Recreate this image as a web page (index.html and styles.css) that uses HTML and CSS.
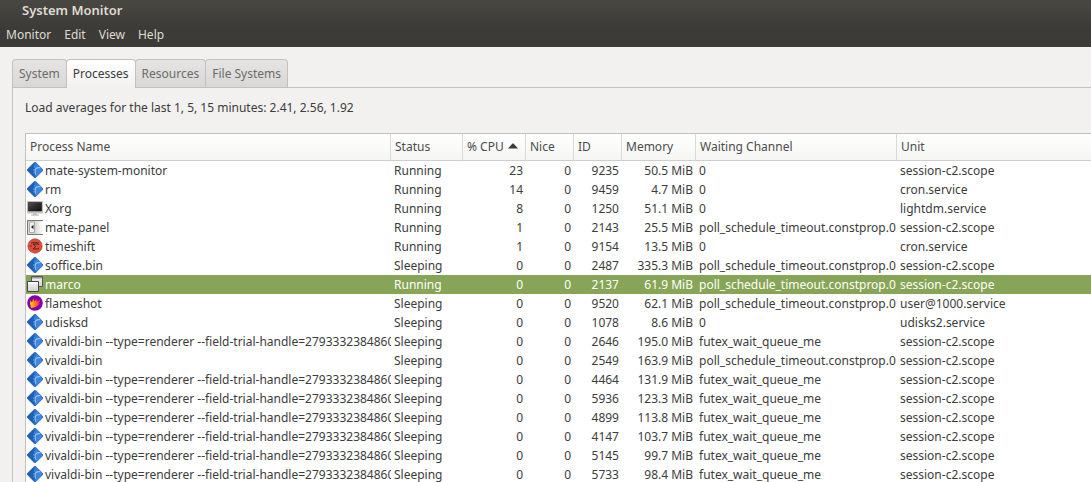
FILE: index.html
```html
<!DOCTYPE html>
<html lang="en">
<head>
<meta charset="utf-8">
<title>System Monitor</title>
<link rel="stylesheet" href="styles.css">
</head>
<body>
<svg class="sprite" aria-hidden="true">
  <defs>
    <linearGradient id="blue" x1="0" y1="0" x2="1" y2="0"><stop offset="0.4" stop-color="#1c61b8"/><stop offset="0.6" stop-color="#3b86e0"/></linearGradient>
    <linearGradient id="glass" x1="0" y1="0" x2="1" y2="1"><stop offset="0" stop-color="#555"/><stop offset="0.5" stop-color="#2c2c2c"/><stop offset="1" stop-color="#151515"/></linearGradient>
    <linearGradient id="pane" x1="0" y1="0" x2="0" y2="1"><stop offset="0" stop-color="#f8f8f8"/><stop offset="1" stop-color="#cfcfcf"/></linearGradient>
    <linearGradient id="fade" x1="0" y1="0" x2="1" y2="0"><stop offset="0.5" stop-color="#d8d8d3"/><stop offset="1" stop-color="#fff"/></linearGradient>
    <linearGradient id="flame" x1="0" y1="0" x2="1" y2="0"><stop offset="0.1" stop-color="#ffc400"/><stop offset="0.5" stop-color="#ff7a18"/><stop offset="1" stop-color="#ff1450"/></linearGradient>
  </defs>
  <symbol id="app" viewBox="0 0 16 16">
    <path d="M7 .8Q8 0 9 .8L15.3 7Q16 8 15.3 9L9 15.3Q8 16 7 15.3L.7 9Q0 8 .7 7Z" fill="url(#blue)" stroke="#1c559f" stroke-width=".7"/>
    <path d="M13 5Q8.5 4.5 7.6 7.8Q7.2 10 8.5 13.2L9.3 12.4Q8.3 9.3 8.9 7.8Q9.8 6 13.6 6Z" fill="#8fc0f5"/>
    <path d="M8.4 5.6L7.2 4.7M7.4 8L6 8M7.6 10.5L6.3 11" stroke="#76aeee" stroke-width="1"/>
  </symbol>
  <symbol id="screen" viewBox="0 0 16 16">
    <path d="M.5 1.5H15.5V13H.5Z" fill="#cfcfca" stroke="#aaa" stroke-width=".7"/>
    <path d="M1.5 2.5H14.5V11H1.5Z" fill="url(#glass)" stroke="#111" stroke-width=".6"/>
    <path d="M6 13H10V14.5H12V15.8H4V14.5H6Z" fill="#c2c2be"/>
  </symbol>
  <symbol id="panel" viewBox="0 0 16 16">
    <path d="M.5 1H16V15.5H.5Z" fill="url(#fade)"/>
    <path d="M16 1.5H.5V15.5H16" fill="none" stroke="#777"/>
    <path d="M2.5 3H7.5V13.5H2.5Z" fill="#f1f1ec" stroke="#aaa"/>
    <path d="M6.5 5.7V10.3L4 8Z" fill="#222"/>
    <path d="M12.5 4.5H14.5V6.5H12.5Z" fill="#fff"/>
  </symbol>
  <symbol id="shift" viewBox="0 0 16 16">
    <circle cx="8" cy="8" r="7.2" fill="#e04c3c" stroke="#a8382d" stroke-width=".6"/>
    <path d="M4 5Q8 3.6 12 5" fill="none" stroke="#692720" stroke-width="1"/>
    <path d="M11.2 7V6H6L8.7 8.4L6 11H11.4V9.8" fill="none" stroke="#4a2520" stroke-width="1"/>
    <path d="M2.8 8H5" stroke="#692720" stroke-width=".8"/>
  </symbol>
  <symbol id="windows" viewBox="0 0 16 16">
    <path d="M4.5 .5H15.5V10.5H4.5Z" fill="url(#pane)" stroke="#555"/>
    <path d="M5 1H15V2.5H5Z" fill="#999"/>
    <path d="M.5 5.5H11.5V15.5H.5Z" fill="url(#pane)" stroke="#454545"/>
    <path d="M1 6H11V7.5H1Z" fill="#fff"/>
  </symbol>
  <symbol id="fire" viewBox="0 0 16 16">
    <circle cx="8" cy="8" r="7.8" fill="#8500a8"/>
    <path d="M4.2 13L3 8.5L3.4 5.2L5 7.5L6.3 3.4L7.3 6.6L9.8 3.8L9.5 6.4L13.5 4.7L11.3 8.6L13 8.3Q9.5 12.8 4.2 13Z" fill="url(#flame)"/>
  </symbol>
</svg>

<header class="chrome">
  <h1 class="title">System Monitor</h1>
  <nav class="menubar">
    <button type="button">Monitor</button>
    <button type="button">Edit</button>
    <button type="button">View</button>
    <button type="button">Help</button>
  </nav>
</header>

<main class="content">
  <div class="tabs" role="tablist">
    <button type="button" role="tab" class="tab" aria-selected="false">System</button>
    <button type="button" role="tab" class="tab tab-active" aria-selected="true">Processes</button>
    <button type="button" role="tab" class="tab" aria-selected="false">Resources</button>
    <button type="button" role="tab" class="tab" aria-selected="false">File Systems</button>
  </div>
  <section class="page" role="tabpanel" aria-label="Processes">
    <p class="load">Load averages for the last 1, 5, 15 minutes: 2.41, 2.56, 1.92</p>
    <div class="list">
      <table class="processes">
        <colgroup>
          <col class="c-name"><col class="c-status"><col class="c-cpu"><col class="c-nice"><col class="c-id"><col class="c-memory"><col class="c-channel"><col class="c-unit">
        </colgroup>
        <thead>
          <tr><th>Process Name</th><th>Status</th><th aria-sort="descending"><span class="sorted">% CPU <svg class="arrow" viewBox="0 0 10 6" aria-hidden="true"><path d="M0 5.5L4.5 .5H5.5L10 5.5Z"/></svg></span></th><th>Nice</th><th>ID</th><th>Memory</th><th>Waiting Channel</th><th>Unit</th></tr>
        </thead>
        <tbody>
          <tr><td><svg class="icon"><use href="#app"/></svg>mate-system-monitor</td><td>Running</td><td>23</td><td>0</td><td>9235</td><td>50.5 MiB</td><td>0</td><td>session-c2.scope</td></tr>
          <tr><td><svg class="icon"><use href="#app"/></svg>rm</td><td>Running</td><td>14</td><td>0</td><td>9459</td><td>4.7 MiB</td><td>0</td><td>cron.service</td></tr>
          <tr><td><svg class="icon"><use href="#screen"/></svg>Xorg</td><td>Running</td><td>8</td><td>0</td><td>1250</td><td>51.1 MiB</td><td>0</td><td>lightdm.service</td></tr>
          <tr><td><svg class="icon"><use href="#panel"/></svg>mate-panel</td><td>Running</td><td>1</td><td>0</td><td>2143</td><td>25.5 MiB</td><td>poll_schedule_timeout.constprop.0</td><td>session-c2.scope</td></tr>
          <tr><td><svg class="icon"><use href="#shift"/></svg>timeshift</td><td>Running</td><td>1</td><td>0</td><td>9154</td><td>13.5 MiB</td><td>0</td><td>cron.service</td></tr>
          <tr><td><svg class="icon"><use href="#app"/></svg>soffice.bin</td><td>Sleeping</td><td>0</td><td>0</td><td>2487</td><td>335.3 MiB</td><td>poll_schedule_timeout.constprop.0</td><td>session-c2.scope</td></tr>
          <tr class="selected"><td><svg class="icon"><use href="#windows"/></svg>marco</td><td>Running</td><td>0</td><td>0</td><td>2137</td><td>61.9 MiB</td><td>poll_schedule_timeout.constprop.0</td><td>session-c2.scope</td></tr>
          <tr><td><svg class="icon"><use href="#fire"/></svg>flameshot</td><td>Sleeping</td><td>0</td><td>0</td><td>9520</td><td>62.1 MiB</td><td>poll_schedule_timeout.constprop.0</td><td>user@1000.service</td></tr>
          <tr><td><svg class="icon"><use href="#app"/></svg>udisksd</td><td>Sleeping</td><td>0</td><td>0</td><td>1078</td><td>8.6 MiB</td><td>0</td><td>udisks2.service</td></tr>
          <tr><td><svg class="icon"><use href="#app"/></svg>vivaldi-bin --type=renderer --field-trial-handle=2793332384860</td><td>Sleeping</td><td>0</td><td>0</td><td>2646</td><td>195.0 MiB</td><td>futex_wait_queue_me</td><td>session-c2.scope</td></tr>
          <tr><td><svg class="icon"><use href="#app"/></svg>vivaldi-bin</td><td>Sleeping</td><td>0</td><td>0</td><td>2549</td><td>163.9 MiB</td><td>poll_schedule_timeout.constprop.0</td><td>session-c2.scope</td></tr>
          <tr><td><svg class="icon"><use href="#app"/></svg>vivaldi-bin --type=renderer --field-trial-handle=2793332384860</td><td>Sleeping</td><td>0</td><td>0</td><td>4464</td><td>131.9 MiB</td><td>futex_wait_queue_me</td><td>session-c2.scope</td></tr>
          <tr><td><svg class="icon"><use href="#app"/></svg>vivaldi-bin --type=renderer --field-trial-handle=2793332384860</td><td>Sleeping</td><td>0</td><td>0</td><td>5936</td><td>123.3 MiB</td><td>futex_wait_queue_me</td><td>session-c2.scope</td></tr>
          <tr><td><svg class="icon"><use href="#app"/></svg>vivaldi-bin --type=renderer --field-trial-handle=2793332384860</td><td>Sleeping</td><td>0</td><td>0</td><td>4899</td><td>113.8 MiB</td><td>futex_wait_queue_me</td><td>session-c2.scope</td></tr>
          <tr><td><svg class="icon"><use href="#app"/></svg>vivaldi-bin --type=renderer --field-trial-handle=2793332384860</td><td>Sleeping</td><td>0</td><td>0</td><td>4147</td><td>103.7 MiB</td><td>futex_wait_queue_me</td><td>session-c2.scope</td></tr>
          <tr><td><svg class="icon"><use href="#app"/></svg>vivaldi-bin --type=renderer --field-trial-handle=2793332384860</td><td>Sleeping</td><td>0</td><td>0</td><td>5145</td><td>99.7 MiB</td><td>futex_wait_queue_me</td><td>session-c2.scope</td></tr>
          <tr><td><svg class="icon"><use href="#app"/></svg>vivaldi-bin --type=renderer --field-trial-handle=2793332384860</td><td>Sleeping</td><td>0</td><td>0</td><td>5733</td><td>98.4 MiB</td><td>futex_wait_queue_me</td><td>session-c2.scope</td></tr>
        </tbody>
      </table>
    </div>
  </section>
</main>
</body>
</html>
```

FILE: styles.css
```css
* { box-sizing: border-box; }

body {
  margin: 0;
  height: 100vh;
  overflow: hidden;
  background: #f2f1f0;
  color: #3c3c3c;
  font: 12px/19px "Noto Sans", "Open Sans", sans-serif;
}

button {
  margin: 0;
  border: 0;
  padding: 0;
  background: none;
  color: inherit;
  font: inherit;
}

.sprite { position: absolute; width: 0; height: 0; }

.chrome {
  height: 47px;
  background: linear-gradient(#484742, #3c3b37 60%);
  color: #dfdbd2;
}

.title {
  margin: 0;
  padding-left: 22px;
  font-size: 13px;
  line-height: 20px;
  font-weight: 600;
}

.menubar {
  display: flex;
  gap: 13px;
  padding: 5px 6px 0;
}

.content { padding: 12px 0 0 12px; }

.tabs { display: flex; }

.tab {
  height: 28px;
  padding: 0 6px;
  border: 1px solid #c3c1bd;
  border-bottom: 0;
  border-radius: 4px 4px 0 0;
  background: linear-gradient(#e6e5e3, #d8d7d5);
  color: #6c6c6a;
}

.tab + .tab { margin-left: -1px; }

.tab-active {
  z-index: 1;
  height: 29px;
  margin-bottom: -1px;
  padding-bottom: 1px;
  background: linear-gradient(#fff, #f2f1f0);
  color: #3c3c3c;
}

.page {
  padding: 10px 0 0 12px;
  border: 1px solid #c3c1bd;
  border-width: 1px 0 0 1px;
}

.load { margin: 0 0 16px; }

.list {
  border: 1px solid #c3c1bd;
  border-right: 0;
  background: #fff;
}

.processes {
  width: 100%;
  border-collapse: separate;
  border-spacing: 0;
  table-layout: fixed;
}

.c-name { width: 365px; }
.c-status { width: 72px; }
.c-cpu { width: 63px; }
.c-nice { width: 48px; }
.c-id { width: 48px; }
.c-memory { width: 74px; }
.c-channel { width: 201px; }

th {
  height: 27px;
  padding: 0 4px 2px;
  border-right: 1px solid #dad9d6;
  border-bottom: 1px solid #d0cecb;
  background: linear-gradient(#fff, #f5f5f4);
  color: #4c4c4c;
  font-weight: 400;
  text-align: left;
  white-space: nowrap;
}

th:last-child { border-right: 0; }

.sorted { display: flex; align-items: center; gap: 4px; }

.arrow { flex: none; width: 10px; height: 6px; fill: #3c3c3c; }

td {
  height: 19px;
  padding: 0 3px;
  overflow: hidden;
  white-space: nowrap;
}

td:first-child { padding: 0 0 0 1px; }

td:nth-child(n+3):nth-child(-n+6) { text-align: right; }

.icon {
  width: 16px;
  height: 16px;
  margin: 1px 2px 0 0;
  vertical-align: top;
}

.selected td { background: #87a556; color: #fff; }
```
